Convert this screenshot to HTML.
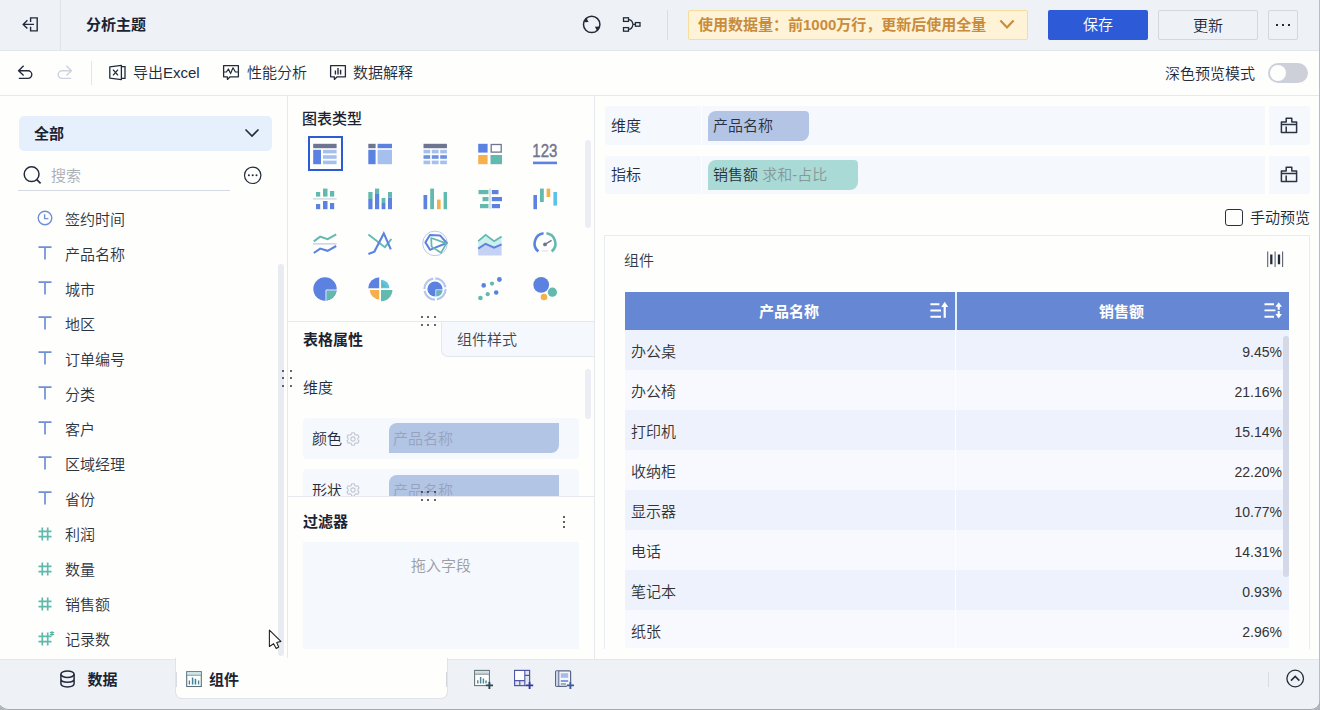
<!DOCTYPE html>
<html lang="zh-CN">
<head>
<meta charset="utf-8">
<title>分析主题</title>
<style>
*{box-sizing:border-box;margin:0;padding:0}
html,body{width:1320px;height:710px;overflow:hidden;background:#fefefd}
body{font-family:"Liberation Sans","Noto Sans CJK SC",sans-serif;font-size:15px;color:#232b3a;position:relative;font-weight:350}
.abs{position:absolute}
.t{position:absolute;white-space:nowrap;line-height:20px;height:20px;padding-top:1px}
.b{font-weight:700}
svg{position:absolute;overflow:visible}
/* header */
#hdr{left:0;top:0;width:1320px;height:51px;background:#eef1f5;border-bottom:1px solid #e2e5ea}
#tbar{left:0;top:51px;width:1320px;height:45px;background:#fefefd;border-bottom:1px solid #e6e8ed}
.vline{position:absolute;width:1px;background:#dcdfe6}
.btn{position:absolute;top:10px;height:30px;border-radius:2px;text-align:center;line-height:29px;font-size:15px}
/* left */
.fi{position:absolute;left:65px;line-height:20px;height:20px;padding-top:1px;white-space:nowrap;color:#2c3442}
/* table */
.row{position:absolute;left:625px;width:664px;height:40px}
.row .n{position:absolute;left:6px;top:12px;line-height:20px;color:#333}
.row .v{position:absolute;right:7px;top:12px;line-height:20px;color:#333;font-size:14px}
.row .d{position:absolute;left:330px;top:0;width:1px;height:40px;background:#fdfdfe}
</style>
</head>
<body>
<!-- HEADER -->
<div id="hdr" class="abs"></div>
<div class="vline" style="left:60px;top:0;height:50px;background:#dfe2e8"></div>
<div class="t b" style="left:86px;top:14px;font-size:15px;color:#1b2333">分析主题</div>
<div class="vline" style="left:667px;top:10px;height:30px;background:#d9dce3"></div>
<div class="abs" style="left:688px;top:10px;width:340px;height:30px;background:#fef3d6;border:1px solid #f8dc9c;border-radius:2px"></div>
<div class="t b" style="left:698px;top:14px;color:#c98b3c">使用数据量：前1000万行，更新后使用全量</div>
<div class="btn" style="left:1048px;width:100px;background:#2d5bd7;color:#fff">保存</div>
<div class="btn" style="left:1158px;width:100px;border:1px solid #d3d7de;color:#1b2333">更新</div>
<div class="btn" style="left:1268px;width:30px;border:1px solid #d3d7de"></div>
<!-- TOOLBAR -->
<div id="tbar" class="abs"></div>
<div class="vline" style="left:91px;top:61px;height:24px;background:#e3e5ea"></div>
<div class="t" style="left:133px;top:62px">导出Excel</div>
<div class="t" style="left:247px;top:62px">性能分析</div>
<div class="t" style="left:353px;top:62px">数据解释</div>
<div class="t" style="left:1165px;top:63px">深色预览模式</div>
<div class="abs" style="left:1268px;top:63px;width:40px;height:20px;border-radius:10px;background:#cdd0d9"></div>
<div class="abs" style="left:1270px;top:65px;width:16px;height:16px;border-radius:8px;background:#fefefd"></div>
<svg style="left:20px;top:15px" width="20" height="19" viewBox="0 0 20 19"><path d="M10.6 7 V2.9 H17.2 V15.9 H10.6 V11.8" fill="none" stroke="#232b3a" stroke-width="1.4"/><path d="M14 9.4 H3.4 M7.4 5.2 L3.2 9.4 L7.4 13.6" fill="none" stroke="#232b3a" stroke-width="1.4"/></svg>
<svg style="left:581px;top:14px" width="22" height="22" viewBox="0 0 22 22"><circle cx="10.7" cy="10.4" r="8.2" fill="none" stroke="#232b3a" stroke-width="1.5"/><path d="M5.2 3.4 L7.6 8 L3.2 8.2 Z" fill="#232b3a"/><path d="M16.4 17.4 L13.9 12.8 L18.3 12.6 Z" fill="#232b3a"/><path d="M2.2 9.6 L3 12" stroke="#eef1f5" stroke-width="0" /></svg>
<svg style="left:622px;top:16px" width="20" height="17" viewBox="0 0 20 17"><rect x="1.5" y="1.8" width="5" height="3.6" fill="none" stroke="#232b3a" stroke-width="1.3"/><rect x="1.5" y="11.6" width="5" height="3.6" fill="none" stroke="#232b3a" stroke-width="1.3"/><rect x="13.4" y="6.6" width="4.6" height="3.6" fill="none" stroke="#232b3a" stroke-width="1.3"/><path d="M6.5 3.6 C9.6 3.6 10.6 6 11 8.4 C10.6 10.8 9.6 13.4 6.5 13.4 M11 8.4 H13.4" fill="none" stroke="#232b3a" stroke-width="1.3"/></svg>
<svg style="left:999px;top:19px" width="16" height="11" viewBox="0 0 16 11"><path d="M1.4 1.6 L8 8.4 L14.6 1.6" fill="none" stroke="#c98b3c" stroke-width="2.2"/></svg>
<div class="abs" style="left:1276px;top:23.5px;width:2.2px;height:2.2px;background:#232b3a"></div>
<div class="abs" style="left:1282px;top:23.5px;width:2.2px;height:2.2px;background:#232b3a"></div>
<div class="abs" style="left:1288px;top:23.5px;width:2.2px;height:2.2px;background:#232b3a"></div>
<svg style="left:17px;top:64px" width="17" height="16" viewBox="0 0 17 16"><path d="M6.6 1.8 L1.6 6.8 L6.6 11.6 M1.8 6.8 H11 A3.8 3.8 0 0 1 11 14.4 H1.8" fill="none" stroke="#232b3a" stroke-width="1.4"/></svg>
<svg style="left:56px;top:64px" width="17" height="16" viewBox="0 0 17 16"><path d="M10.4 1.8 L15.4 6.8 L10.4 11.6 M15.2 6.8 H6 A3.8 3.8 0 0 0 6 14.4 H15.2" fill="none" stroke="#cdd2de" stroke-width="1.4"/></svg>
<svg style="left:108px;top:64px" width="19" height="17" viewBox="0 0 19 17"><path d="M1.8 2.8 L13.4 1.4 V15.6 L1.8 14.2 Z" fill="none" stroke="#232b3a" stroke-width="1.3" stroke-linejoin="round"/><path d="M5 5.6 L10 11.4 M10 5.6 L5 11.4" fill="none" stroke="#232b3a" stroke-width="1.3"/><path d="M13.4 2.6 H17 V14.4 H13.4" fill="none" stroke="#232b3a" stroke-width="1.3"/></svg>
<svg style="left:222px;top:64px" width="18" height="17" viewBox="0 0 18 17"><path d="M1.6 1.6 H16.4 V12.8 H8.2 L5.4 15.4 V12.8 H1.6 Z" fill="none" stroke="#232b3a" stroke-width="1.3" stroke-linejoin="round"/><path d="M1.6 8 H4.4 L6.4 5 L8.6 9.6 L11 3.8 L13.4 8 H16.4" fill="none" stroke="#232b3a" stroke-width="1.2" stroke-linejoin="round"/></svg>
<svg style="left:329px;top:64px" width="18" height="17" viewBox="0 0 18 17"><path d="M1.6 1.6 H16.4 V12.8 H8.2 L5.4 15.4 V12.8 H1.6 Z" fill="none" stroke="#232b3a" stroke-width="1.3" stroke-linejoin="round"/><path d="M6.4 10.4 V6.6 M9 10.4 V4 M11.6 10.4 V5.8" fill="none" stroke="#232b3a" stroke-width="1.4"/></svg>
<!-- LEFT PANEL -->
<div id="left">
<div class="vline" style="left:287px;top:96px;height:563px;background:#e6e8ed"></div>
<div class="abs" style="left:19px;top:116px;width:253px;height:35px;background:#e6f0fd;border-radius:5px"></div>
<div class="t b" style="left:34px;top:123px;color:#1b2333">全部</div>
<svg style="left:244px;top:128px" width="16" height="10" viewBox="0 0 16 10"><path d="M1.5 1.5 L8 8 L14.5 1.5" fill="none" stroke="#232b3a" stroke-width="1.6"/></svg>
<svg style="left:22px;top:165px" width="22" height="22" viewBox="0 0 22 22"><circle cx="9.6" cy="9.2" r="7.4" fill="none" stroke="#232b3a" stroke-width="1.5"/><path d="M14.8 14.6 L18.6 18.4" stroke="#232b3a" stroke-width="1.6" fill="none"/></svg>
<div class="t" style="left:51px;top:165px;color:#a9adb5">搜索</div>
<div class="abs" style="left:18px;top:190px;width:212px;height:1px;background:#d5d9e2"></div>
<svg style="left:243px;top:166px" width="20" height="20" viewBox="0 0 20 20"><circle cx="9.7" cy="9.3" r="8.2" fill="none" stroke="#232b3a" stroke-width="1.2"/><circle cx="5.9" cy="9.3" r="1" fill="#232b3a"/><circle cx="9.7" cy="9.3" r="1" fill="#232b3a"/><circle cx="13.5" cy="9.3" r="1" fill="#232b3a"/></svg>
<div class="fi" style="top:209px">签约时间</div>
<svg style="left:37px;top:210px" width="16" height="16" viewBox="0 0 16 16"><circle cx="8" cy="8" r="6.8" fill="none" stroke="#6f8fd6" stroke-width="1.4"/><path d="M7.6 4.2 V8.6 H11.4" fill="none" stroke="#6f8fd6" stroke-width="1.4"/></svg>
<div class="fi" style="top:244px">产品名称</div>
<svg style="left:38px;top:246px" width="14" height="14" viewBox="0 0 14 14"><path d="M0.5 1.2 H13.5 M7 1.2 V13.6" fill="none" stroke="#6f8fd6" stroke-width="1.7"/></svg>
<div class="fi" style="top:279px">城市</div>
<svg style="left:38px;top:281px" width="14" height="14" viewBox="0 0 14 14"><path d="M0.5 1.2 H13.5 M7 1.2 V13.6" fill="none" stroke="#6f8fd6" stroke-width="1.7"/></svg>
<div class="fi" style="top:314px">地区</div>
<svg style="left:38px;top:316px" width="14" height="14" viewBox="0 0 14 14"><path d="M0.5 1.2 H13.5 M7 1.2 V13.6" fill="none" stroke="#6f8fd6" stroke-width="1.7"/></svg>
<div class="fi" style="top:349px">订单编号</div>
<svg style="left:38px;top:351px" width="14" height="14" viewBox="0 0 14 14"><path d="M0.5 1.2 H13.5 M7 1.2 V13.6" fill="none" stroke="#6f8fd6" stroke-width="1.7"/></svg>
<div class="fi" style="top:384px">分类</div>
<svg style="left:38px;top:386px" width="14" height="14" viewBox="0 0 14 14"><path d="M0.5 1.2 H13.5 M7 1.2 V13.6" fill="none" stroke="#6f8fd6" stroke-width="1.7"/></svg>
<div class="fi" style="top:419px">客户</div>
<svg style="left:38px;top:421px" width="14" height="14" viewBox="0 0 14 14"><path d="M0.5 1.2 H13.5 M7 1.2 V13.6" fill="none" stroke="#6f8fd6" stroke-width="1.7"/></svg>
<div class="fi" style="top:454px">区域经理</div>
<svg style="left:38px;top:456px" width="14" height="14" viewBox="0 0 14 14"><path d="M0.5 1.2 H13.5 M7 1.2 V13.6" fill="none" stroke="#6f8fd6" stroke-width="1.7"/></svg>
<div class="fi" style="top:489px">省份</div>
<svg style="left:38px;top:491px" width="14" height="14" viewBox="0 0 14 14"><path d="M0.5 1.2 H13.5 M7 1.2 V13.6" fill="none" stroke="#6f8fd6" stroke-width="1.7"/></svg>
<div class="fi" style="top:524px">利润</div>
<svg style="left:38px;top:527px" width="16" height="14" viewBox="0 0 16 14"><path d="M4.3 0.5 V13.5 M9.7 0.5 V13.5 M0.5 4.3 H13.5 M0.5 9.7 H13.5" fill="none" stroke="#5fb9ac" stroke-width="1.7"/></svg>
<div class="fi" style="top:559px">数量</div>
<svg style="left:38px;top:562px" width="16" height="14" viewBox="0 0 16 14"><path d="M4.3 0.5 V13.5 M9.7 0.5 V13.5 M0.5 4.3 H13.5 M0.5 9.7 H13.5" fill="none" stroke="#5fb9ac" stroke-width="1.7"/></svg>
<div class="fi" style="top:594px">销售额</div>
<svg style="left:38px;top:597px" width="16" height="14" viewBox="0 0 16 14"><path d="M4.3 0.5 V13.5 M9.7 0.5 V13.5 M0.5 4.3 H13.5 M0.5 9.7 H13.5" fill="none" stroke="#5fb9ac" stroke-width="1.7"/></svg>
<div class="fi" style="top:629px">记录数</div>
<svg style="left:38px;top:632px" width="16" height="14" viewBox="0 0 16 14"><path d="M4.3 0.5 V13.5 M9.7 0.5 V13.5 M0.5 4.3 H13.5 M0.5 9.7 H13.5" fill="none" stroke="#5fb9ac" stroke-width="1.7"/><path d="M14 -1 V3.8 M11.9 0.2 L16.1 2.6 M16.1 0.2 L11.9 2.6" stroke="#4fb3a4" stroke-width="1.1" fill="none"/></svg>
<div class="abs" style="left:278px;top:264px;width:6px;height:392px;border-radius:3px;background:#e9ebf2"></div>
<svg style="left:268px;top:629px" width="16" height="22" viewBox="0 0 16 22"><path d="M1.4 1.1 V17.5 L5.6 14.7 L8.2 19.5 L10.7 18 L8.7 13.5 L12.9 12.4 Z" fill="#fff" stroke="#222" stroke-width="1.1" stroke-linejoin="round"/></svg>
</div>
<!-- CENTER PANEL -->
<div id="center">
<div class="vline" style="left:594px;top:96px;height:563px;background:#e6e8ed"></div>
<div class="t b" style="left:302px;top:108px;color:#1b2333;font-weight:500">图表类型</div>
<div class="abs" style="left:308px;top:136px;width:35px;height:35px;border:2px solid #2d5bd7"></div>
<svg style="left:0;top:0" width="1320" height="710" viewBox="0 0 1320 710"><rect x="313.2" y="143.8" width="23.4" height="4.4" fill="#6e7591"/><rect x="313.2" y="149.8" width="7.8" height="14.4" fill="#5b82e0"/><rect x="323" y="149.8" width="13.6" height="3.6" fill="#a6c0ee"/><rect x="323" y="155.2" width="13.6" height="3.6" fill="#a6c0ee"/><rect x="323" y="160.6" width="13.6" height="3.6" fill="#a6c0ee"/>
<rect x="368.3" y="143.8" width="7.3" height="4.4" fill="#6e7591"/><rect x="377.6" y="143.8" width="14.4" height="4.4" fill="#5b82e0"/><rect x="368.3" y="149.8" width="7.3" height="14.4" fill="#5b82e0"/><rect x="377.6" y="149.8" width="14.4" height="14.4" fill="#a6c0ee"/>
<rect x="423.5" y="143.8" width="23.4" height="4.4" fill="#6e7591"/><rect x="423.5" y="149.8" width="6.7" height="3.6" fill="#a6c0ee"/><rect x="431.8" y="149.8" width="6.8" height="3.6" fill="#a6c0ee"/><rect x="440.2" y="149.8" width="6.7" height="3.6" fill="#a6c0ee"/><rect x="423.5" y="155.2" width="6.7" height="3.6" fill="#6d90e2"/><rect x="431.8" y="155.2" width="6.8" height="3.6" fill="#6d90e2"/><rect x="440.2" y="155.2" width="6.7" height="3.6" fill="#6d90e2"/><rect x="423.5" y="160.6" width="6.7" height="3.6" fill="#a6c0ee"/><rect x="431.8" y="160.6" width="6.8" height="3.6" fill="#a6c0ee"/><rect x="440.2" y="160.6" width="6.7" height="3.6" fill="#a6c0ee"/>
<rect x="478.2" y="143.8" width="9.4" height="8.8" fill="#5b82e0"/><rect x="491.2" y="144.5" width="10" height="7.6" fill="#fff" stroke="#6e7591" stroke-width="1.3"/><rect x="478.2" y="155" width="9.4" height="9.2" fill="#f5b04d"/><rect x="490.5" y="155" width="11.5" height="9.2" fill="#62b9ae"/>
<text x="532.3" y="157" font-family="Liberation Sans,sans-serif" font-size="18.5" fill="#6e7591" stroke="#6e7591" stroke-width="0.45" textLength="25" lengthAdjust="spacingAndGlyphs">123</text><rect x="533" y="161.6" width="24" height="2.6" fill="#5b82e0"/>
<rect x="316" y="192" width="4.2" height="4.6" fill="#62b9ae"/><rect x="323" y="188.6" width="4.5" height="8.0" fill="#62b9ae"/><rect x="330" y="191" width="4.2" height="5.6" fill="#62b9ae"/><rect x="313" y="198.3" width="23.6" height="1.2" fill="#c9cfdc"/><rect x="316" y="204" width="4.2" height="5.2" fill="#5b82e0"/><rect x="323" y="201" width="4.5" height="8.2" fill="#5b82e0"/><rect x="330" y="203" width="4.2" height="6.2" fill="#5b82e0"/>
<rect x="368.3" y="192" width="4.2" height="7" fill="#62b9ae"/><rect x="368.3" y="199" width="4.2" height="10.2" fill="#5b82e0"/><rect x="375" y="188.6" width="4.2" height="5.4" fill="#62b9ae"/><rect x="375" y="194" width="4.2" height="15.2" fill="#5b82e0"/><rect x="381.6" y="198" width="3.8" height="5" fill="#62b9ae"/><rect x="381.6" y="203" width="3.8" height="6.2" fill="#5b82e0"/><rect x="388" y="192" width="4" height="5.6" fill="#62b9ae"/><rect x="388" y="197.6" width="4" height="11.6" fill="#5b82e0"/>
<rect x="423.5" y="195" width="3.7" height="14.2" fill="#5b82e0"/><rect x="430.2" y="188.6" width="3.8" height="20.6" fill="#62b9ae"/><rect x="437" y="199.6" width="3.6" height="9.6" fill="#f5b04d"/><rect x="443.6" y="192" width="3.4" height="17.2" fill="#62b9ae"/>
<rect x="489.4" y="188.6" width="1.2" height="20.6" fill="#c9cfdc"/><rect x="478.5" y="190" width="10.0" height="4.2" fill="#62b9ae"/><rect x="482.5" y="197" width="6.0" height="4.2" fill="#62b9ae"/><rect x="480" y="204" width="8.5" height="4.2" fill="#62b9ae"/><rect x="491.8" y="190" width="6.7" height="4.2" fill="#5b82e0"/><rect x="491.8" y="197" width="10.2" height="4.2" fill="#5b82e0"/><rect x="491.8" y="204" width="8.2" height="4.2" fill="#5b82e0"/>
<rect x="533.4" y="195" width="3.6" height="14.2" fill="#5b82e0"/><rect x="540" y="188.6" width="3.8" height="13.4" fill="#62b9ae"/><rect x="546.6" y="188.6" width="3.6" height="8.4" fill="#f5b04d"/><rect x="553.4" y="192" width="3.6" height="13.6" fill="#5cc3e8"/>
<polyline points="313.8,241.4 320.2,236.6 327.6,239.2 336.2,234.4" fill="none" stroke="#62b9ae" stroke-width="2"/><rect x="313" y="243.2" width="23.6" height="1.4" fill="#c9cfdc"/><polyline points="313.8,253 320.2,248.6 327.6,250.8 336.2,246" fill="none" stroke="#5b82e0" stroke-width="2.1"/>
<polyline points="368.4,234.4 384.9,247.2 391.4,239" fill="none" stroke="#62b9ae" stroke-width="1.9"/><polyline points="368.4,254 374.4,251.6 383.8,233.4 390.8,249.4" fill="none" stroke="#5b82e0" stroke-width="2.1"/>
<circle cx="435" cy="243.4" r="12.3" fill="none" stroke="#bccaec" stroke-width="1"/><polygon points="425.4,242.4 430,235 440,235.4 446.8,243 435.8,247.4 430,249.8" fill="none" stroke="#5b82e0" stroke-width="2" stroke-linejoin="round"/><polygon points="431.2,238 446.4,243.4 441,252.8 431.6,246.6" fill="none" stroke="#62b9ae" stroke-width="1.7" stroke-linejoin="round"/>
<polygon points="478.2,241.2 485.6,234.8 494.1,241.2 501.6,236.5 501.6,244.4 494.1,247.6 485.6,243.8 478.2,248.6" fill="#cdeeee"/><polygon points="478.2,248.6 485.6,243.8 494.1,247.6 501.6,244.4 501.6,255.6 478.2,255.6" fill="#c5d2f3"/><polyline points="478.2,241.2 485.6,234.8 494.1,241.2 501.6,236.5" fill="none" stroke="#62b9ae" stroke-width="1.7"/><polyline points="478.2,248.6 485.6,243.8 494.1,247.6 501.6,244.4" fill="none" stroke="#5b82e0" stroke-width="1.9"/>
<path d="M538.32 251.57 A10.4 10.4 0 0 1 543.55 233.30" fill="none" stroke="#5b82e0" stroke-width="2.6"/><path d="M546.45 233.30 A10.4 10.4 0 0 1 551.68 251.57" fill="none" stroke="#62b9ae" stroke-width="2.6"/><circle cx="545" cy="244.4" r="1.9" fill="#6e7591"/><path d="M545 244.4 L551.6 240.4" stroke="#6e7591" stroke-width="1.3"/><rect x="542" y="250.4" width="6" height="1" fill="#d5d9e3"/>
<circle cx="325" cy="289" r="11.7" fill="#5b82e0"/><path d="M326.6 290.6 H336.6 A11.7 11.7 0 0 1 326.6 300.6 Z" fill="#62b9ae"/><path d="M326 301 V290 H337" fill="none" stroke="#e9effb" stroke-width="1"/>
<path d="M379.2 288.2 V277.2 A11.4 11.4 0 0 0 368.2 288.2 Z" fill="#5b82e0"/><path d="M381 288.2 V279.8 A8.6 8.6 0 0 1 389.4 288.2 Z" fill="#5cc3e8"/><path d="M382.2 287 V282.6 L386.6 287 Z" fill="#62b9ae"/><path d="M379.2 290 H369.8 A9.6 9.6 0 0 0 379.2 299.4 Z" fill="#f5b04d"/><path d="M381 290 H392.4 A11.4 11.4 0 0 1 381 301.2 Z" fill="#62b9ae"/>
<circle cx="435" cy="289" r="10.6" fill="none" stroke="#b4c6f0" stroke-width="2.2" stroke-dasharray="14.6 2"/><circle cx="435" cy="289" r="7.6" fill="#5b82e0"/><path d="M436.4 290.4 H442.6 A7.6 7.6 0 0 1 436.4 296.6 Z" fill="#62b9ae"/><path d="M435.8 297 V289.8 H443" fill="none" stroke="#e9effb" stroke-width="0.9"/>
<circle cx="483.7" cy="285.4" r="2.3" fill="#5b82e0"/><circle cx="492" cy="283.6" r="2.1" fill="#62b9ae"/><circle cx="499.4" cy="279.5" r="2.4" fill="#5b82e0"/><circle cx="480.4" cy="298" r="2.3" fill="#62b9ae"/><circle cx="487.7" cy="294.2" r="2.1" fill="#62b9ae"/><circle cx="496.2" cy="292.5" r="2.3" fill="#5b82e0"/>
<circle cx="541.2" cy="284.8" r="7.9" fill="#5b82e0"/><circle cx="552.4" cy="292.2" r="4.6" fill="#62b9ae"/><circle cx="544" cy="297" r="3.3" fill="#f5b04d"/></svg>
<div class="abs" style="left:585px;top:140px;width:6px;height:88px;border-radius:3px;background:#eceef5"></div>
<div class="abs" style="left:288px;top:321px;width:306px;height:1px;background:#e6e8ed"></div>
<div class="abs" style="left:441px;top:321px;width:153px;height:36px;background:#f5f8fd;border-left:1px solid #e3e8f0;border-bottom:1px solid #e3e8f0;border-top:1px solid #e6e8ed;border-bottom-left-radius:7px"></div>
<div class="abs" style="left:420.7px;top:316.2px;width:2px;height:2px;border-radius:1px;background:#2c3444"></div><div class="abs" style="left:427.2px;top:316.2px;width:2px;height:2px;border-radius:1px;background:#2c3444"></div><div class="abs" style="left:433.7px;top:316.2px;width:2px;height:2px;border-radius:1px;background:#2c3444"></div><div class="abs" style="left:420.7px;top:324.2px;width:2px;height:2px;border-radius:1px;background:#2c3444"></div><div class="abs" style="left:427.2px;top:324.2px;width:2px;height:2px;border-radius:1px;background:#2c3444"></div><div class="abs" style="left:433.7px;top:324.2px;width:2px;height:2px;border-radius:1px;background:#2c3444"></div>
<div class="t b" style="left:303px;top:329px;color:#1b2333">表格属性</div>
<div class="t" style="left:457px;top:329px;color:#3b4657">组件样式</div>
<div class="abs" style="left:282.2px;top:369.7px;width:2px;height:2px;border-radius:1px;background:#2c3444"></div><div class="abs" style="left:290.2px;top:369.7px;width:2px;height:2px;border-radius:1px;background:#2c3444"></div><div class="abs" style="left:282.2px;top:377.2px;width:2px;height:2px;border-radius:1px;background:#2c3444"></div><div class="abs" style="left:290.2px;top:377.2px;width:2px;height:2px;border-radius:1px;background:#2c3444"></div><div class="abs" style="left:282.2px;top:384.7px;width:2px;height:2px;border-radius:1px;background:#2c3444"></div><div class="abs" style="left:290.2px;top:384.7px;width:2px;height:2px;border-radius:1px;background:#2c3444"></div>
<div class="t" style="left:303px;top:377px">维度</div>
<div class="abs" style="left:585px;top:369px;width:6px;height:50px;border-radius:3px;background:#eceef5"></div>
<div class="abs" style="left:303px;top:418px;width:276px;height:41px;background:#f5f8fd;border-radius:4px"></div>
<div class="t" style="left:312px;top:428px">颜色</div>
<svg style="left:345.5px;top:431.5px" width="14" height="14" viewBox="0 0 14 14"><path d="M5.78 0.72 L8.22 0.72 L8.63 2.27 L10.28 3.23 L11.83 2.80 L13.05 4.92 L11.91 6.05 L11.91 7.95 L13.05 9.08 L11.83 11.20 L10.28 10.77 L8.63 11.73 L8.22 13.28 L5.78 13.28 L5.37 11.73 L3.72 10.77 L2.17 11.20 L0.95 9.08 L2.09 7.95 L2.09 6.05 L0.95 4.92 L2.17 2.80 L3.72 3.23 L5.37 2.27 Z" fill="none" stroke="#c3c7d1" stroke-width="1.15" stroke-linejoin="round"/><circle cx="7" cy="7" r="2.1" fill="none" stroke="#c3c7d1" stroke-width="1.1"/></svg>
<div class="abs" style="left:389px;top:423px;width:170px;height:30px;background:#b2c5e5;border-radius:8px 0 8px 0"></div>
<div class="t" style="left:393px;top:428px;color:#96a3bf">产品名称</div>
<div class="abs" style="left:288px;top:469px;width:306px;height:27px;overflow:hidden"><div class="abs" style="left:15px;top:0;width:276px;height:41px;background:#f5f8fd;border-radius:4px"></div><div class="t" style="left:24px;top:11px">形状</div><svg style="left:57.5px;top:14px" width="14" height="14" viewBox="0 0 14 14"><path d="M5.78 0.72 L8.22 0.72 L8.63 2.27 L10.28 3.23 L11.83 2.80 L13.05 4.92 L11.91 6.05 L11.91 7.95 L13.05 9.08 L11.83 11.20 L10.28 10.77 L8.63 11.73 L8.22 13.28 L5.78 13.28 L5.37 11.73 L3.72 10.77 L2.17 11.20 L0.95 9.08 L2.09 7.95 L2.09 6.05 L0.95 4.92 L2.17 2.80 L3.72 3.23 L5.37 2.27 Z" fill="none" stroke="#c3c7d1" stroke-width="1.15" stroke-linejoin="round"/><circle cx="7" cy="7" r="2.1" fill="none" stroke="#c3c7d1" stroke-width="1.1"/></svg><div class="abs" style="left:101px;top:6px;width:170px;height:30px;background:#b2c5e5;border-radius:8px 0 8px 0"></div><div class="t" style="left:105px;top:11px;color:#96a3bf">产品名称</div></div>
<div class="abs" style="left:288px;top:496px;width:306px;height:1px;background:#e6e8ed"></div>
<div class="abs" style="left:420.7px;top:491.2px;width:2px;height:2px;border-radius:1px;background:#2c3444"></div><div class="abs" style="left:427.2px;top:491.2px;width:2px;height:2px;border-radius:1px;background:#2c3444"></div><div class="abs" style="left:433.7px;top:491.2px;width:2px;height:2px;border-radius:1px;background:#2c3444"></div><div class="abs" style="left:420.7px;top:498.7px;width:2px;height:2px;border-radius:1px;background:#2c3444"></div><div class="abs" style="left:427.2px;top:498.7px;width:2px;height:2px;border-radius:1px;background:#2c3444"></div><div class="abs" style="left:433.7px;top:498.7px;width:2px;height:2px;border-radius:1px;background:#2c3444"></div>
<div class="t b" style="left:303px;top:511px;color:#1b2333">过滤器</div>
<div class="abs" style="left:562.5px;top:515.5px;width:2px;height:2px;border-radius:1px;background:#232b3a"></div><div class="abs" style="left:562.5px;top:520.5px;width:2px;height:2px;border-radius:1px;background:#232b3a"></div><div class="abs" style="left:562.5px;top:525.5px;width:2px;height:2px;border-radius:1px;background:#232b3a"></div>
<div class="abs" style="left:303px;top:542px;width:276px;height:107px;background:#f5f8fd"></div>
<div class="t" style="left:411px;top:555px;color:#9a9da3">拖入字段</div>
</div>
<!-- RIGHT PANEL -->
<div id="right">
<div class="abs" style="left:605px;top:106px;width:96px;height:39px;background:#f5f8fd;border-radius:3px 0 0 3px"></div>
<div class="abs" style="left:702px;top:106px;width:563px;height:39px;background:#f5f8fd"></div>
<div class="abs" style="left:1269px;top:106px;width:41px;height:39px;background:#f5f8fd;border-radius:0 3px 3px 0"></div>
<div class="t" style="left:611px;top:115px">维度</div>
<div class="abs" style="left:605px;top:156px;width:96px;height:38px;background:#f5f8fd;border-radius:3px 0 0 3px"></div>
<div class="abs" style="left:702px;top:156px;width:563px;height:38px;background:#f5f8fd"></div>
<div class="abs" style="left:1269px;top:156px;width:41px;height:38px;background:#f5f8fd;border-radius:0 3px 3px 0"></div>
<div class="t" style="left:611px;top:164px">指标</div>
<svg style="left:1280px;top:117px" width="18" height="17" viewBox="0 0 18 17"><path d="M6.2 1.2 H11.8 V4.9 H16.6 V15.6 H1.4 V4.9 H6.2 Z M1.4 7.6 H16.6 M6.2 9.6 V15.6" fill="none" stroke="#2c3444" stroke-width="1.5" stroke-linejoin="round"/></svg>
<svg style="left:1280px;top:166px" width="18" height="17" viewBox="0 0 18 17"><path d="M6.2 1.2 H11.8 V4.9 H16.6 V15.6 H1.4 V4.9 H6.2 Z M1.4 7.6 H16.6 M6.2 9.6 V15.6" fill="none" stroke="#2c3444" stroke-width="1.5" stroke-linejoin="round"/></svg>
<div class="abs" style="left:708px;top:111px;width:101px;height:30px;background:#b3c4e4;border-radius:8px 4px 8px 0"></div>
<div class="t" style="left:713px;top:115px;color:#2a3040">产品名称</div>
<div class="abs" style="left:708px;top:160px;width:150px;height:30px;background:#a9dad5;border-radius:8px 4px 8px 0"></div>
<div class="t" style="left:713px;top:164px;color:#2a3040">销售额 <span style="color:#86999a">求和-占比</span></div>
<div class="abs" style="left:1225px;top:209px;width:18px;height:17px;border:1.5px solid #2a3040;border-radius:3px;background:#fefefd"></div>
<div class="t" style="left:1250px;top:207px">手动预览</div>
<div class="abs" style="left:604px;top:235px;width:706px;height:414px;border:1px solid #e8ebf0;border-bottom:none"></div>
<div class="t" style="left:624px;top:250px;color:#333a48">组件</div>
<svg style="left:1267px;top:251px" width="17" height="17" viewBox="0 0 17 17"><path d="M0.7 0.6 V16 M8.1 0.6 V16 M15.6 0.6 V16" stroke="#5a6275" stroke-width="1.1"/><path d="M4.3 3.4 V13.2 M12 3.4 V13.2" stroke="#232b3a" stroke-width="2.3"/></svg>
<div class="abs" style="left:625px;top:292px;width:664px;height:38px;background:#6687d3"></div>
<div class="abs" style="left:955px;top:292px;width:1.5px;height:38px;background:#e6f2fd"></div>
<div class="t b" style="left:759px;top:301px;color:#fff">产品名称</div>
<div class="t b" style="left:1099px;top:301px;color:#fff">销售额</div>
<svg style="left:930px;top:300px" width="20" height="20" viewBox="0 0 20 20"><path d="M0.4 4.2 H9.4 M0.4 10.5 H11 M0.4 16.8 H11" stroke="#fff" stroke-width="1.9"/><path d="M14.7 17.8 V6" stroke="#fff" stroke-width="2.2"/><path d="M14.7 1.8 L18.2 6.9 H11.2 Z" fill="#fff"/></svg>
<svg style="left:1264px;top:300px" width="20" height="20" viewBox="0 0 20 20"><path d="M0.5 4.3 H10 M0.5 10.4 H11.4 M0.5 16.8 H10" stroke="#fff" stroke-width="1.9"/><path d="M14.7 6 V9.8 M14.7 11 V14.6" stroke="#fff" stroke-width="2.1"/><path d="M14.7 2.2 L18 6.7 H11.4 Z M14.7 18.5 L18 14 H11.4 Z" fill="#fff"/></svg>
<div class="abs" style="left:0;top:330px;width:1320px;height:318px;overflow:hidden"><div class="row" style="top:0px;background:#eef2fc"><span class="n">办公桌</span><span class="v">9.45%</span><span class="d"></span></div><div class="row" style="top:40px;background:#f7f9fe"><span class="n">办公椅</span><span class="v">21.16%</span><span class="d"></span></div><div class="row" style="top:80px;background:#eef2fc"><span class="n">打印机</span><span class="v">15.14%</span><span class="d"></span></div><div class="row" style="top:120px;background:#f7f9fe"><span class="n">收纳柜</span><span class="v">22.20%</span><span class="d"></span></div><div class="row" style="top:160px;background:#eef2fc"><span class="n">显示器</span><span class="v">10.77%</span><span class="d"></span></div><div class="row" style="top:200px;background:#f7f9fe"><span class="n">电话</span><span class="v">14.31%</span><span class="d"></span></div><div class="row" style="top:240px;background:#eef2fc"><span class="n">笔记本</span><span class="v">0.93%</span><span class="d"></span></div><div class="row" style="top:280px;background:#f7f9fe"><span class="n">纸张</span><span class="v">2.96%</span><span class="d"></span></div></div>
<div class="abs" style="left:1283px;top:336px;width:6px;height:241px;border-radius:3px;background:#d3d9e6"></div>
</div>
<!-- BOTTOM BAR -->
<div id="bottom">
<div class="abs" style="left:0;top:659px;width:1320px;height:51px;background:#eef1f6;border-top:1px solid #e3e6ec"></div>
<div class="abs" style="left:175px;top:658px;width:273px;height:40.5px;background:#fefefd;border-radius:0 0 7px 7px;border:1px solid #dfe3ea;border-top:none"></div>
<div class="vline" style="left:446px;top:672px;height:15px;background:#d3d6dd"></div>
<div class="vline" style="left:176px;top:672px;height:15px;background:#d9dce3"></div>
<svg style="left:59px;top:670px" width="17" height="18" viewBox="0 0 17 18"><ellipse cx="8.5" cy="4.2" rx="6.6" ry="3.2" fill="none" stroke="#232b3a" stroke-width="1.5"/><path d="M1.9 4.2 V13.6 C1.9 15.6 5 16.9 8.5 16.9 C12 16.9 15.1 15.6 15.1 13.6 V4.2 M1.9 9 C1.9 11 5 12.2 8.5 12.2 C12 12.2 15.1 11 15.1 9" fill="none" stroke="#232b3a" stroke-width="1.5"/></svg>
<div class="t b" style="left:87.5px;top:669px;color:#1b2333">数据</div>
<svg style="left:186px;top:671px" width="16" height="16" viewBox="0 0 16 16"><rect x="0.7" y="0.7" width="14.6" height="14.8" fill="#fdfefe" stroke="#5d6f78" stroke-width="1.1"/><rect x="1.3" y="1.3" width="13.4" height="2.4" fill="#c9e9e8"/><path d="M0.7 4.2 H15.3" stroke="#6f9a98" stroke-width="1"/><rect x="6" y="7.4" width="3.6" height="6" fill="#bfe6dc"/><path d="M3.4 13.4 V9.6 M6.5 13.4 V6.6 M9.6 13.4 V8 M12.6 13.4 V9.6" stroke="#4a7f9a" stroke-width="1.3"/></svg>
<div class="t b" style="left:209px;top:669px;color:#1b2333">组件</div>
<svg style="left:473px;top:669px" width="22" height="22" viewBox="0 0 22 22"><rect x="1.6" y="1.4" width="14.8" height="15.2" fill="#fdfefe" stroke="#5f737c" stroke-width="1.05"/><rect x="2.3" y="2.2" width="13.4" height="2.6" fill="#cfd9dc"/><path d="M1.6 5.2 H16.4" stroke="#6a7f88" stroke-width="0.9"/><path d="M4.8 14.4 V11.2 M7.6 14.4 V8 M10.4 14.4 V9.6 M13 14.4 V11.6" stroke="#4b8494" stroke-width="1.4"/><path d="M16.4 12.8 V20 M12.8 16.4 H20" stroke="#eef1f5" stroke-width="4.6"/><path d="M16.4 12.8 V20 M12.8 16.4 H20" stroke="#2c4652" stroke-width="1.9"/></svg>
<svg style="left:513px;top:669px" width="22" height="22" viewBox="0 0 22 22"><rect x="1.6" y="1.4" width="15" height="15.2" fill="#e3e6ee" stroke="#4d57a6" stroke-width="1.2"/><rect x="2.2" y="2" width="9.6" height="9.6" fill="#fefefe"/><path d="M11.8 1.4 V16.6 M1.6 11.6 H11.8 M6.8 11.6 V16.6 M11.8 6.4 H16.6" fill="none" stroke="#4d57a6" stroke-width="1.1"/><path d="M16.6 12.8 V20 M13 16.4 H20.2" stroke="#eef1f5" stroke-width="4.6"/><path d="M16.6 12.8 V20 M13 16.4 H20.2" stroke="#343b9c" stroke-width="1.9"/></svg>
<svg style="left:554px;top:669px" width="22" height="22" viewBox="0 0 22 22"><rect x="1.6" y="1.8" width="15" height="15.6" rx="1" fill="#f4f6fb" stroke="#5a6688" stroke-width="1.2"/><rect x="2.2" y="2.4" width="2.4" height="14.4" fill="#c9d3ea"/><path d="M4.8 1.8 V17.4" stroke="#5a6688" stroke-width="1"/><rect x="6.8" y="4.2" width="7.4" height="4.6" fill="#a9bce8"/><path d="M6.8 12 H14.2" stroke="#5b7fd8" stroke-width="1.5"/><path d="M6.8 15 H12" stroke="#7a869e" stroke-width="1.3"/><path d="M16.4 12.8 V20 M12.8 16.4 H20" stroke="#eef1f5" stroke-width="4.6"/><path d="M16.4 12.8 V20 M12.8 16.4 H20" stroke="#3c5a9c" stroke-width="1.9"/></svg>
<div class="vline" style="left:1268px;top:672px;height:15px;background:#d9dce3"></div>
<svg style="left:1285px;top:670px" width="20" height="20" viewBox="0 0 20 20"><circle cx="10.2" cy="8.5" r="8.3" fill="none" stroke="#232b3a" stroke-width="1.3"/><path d="M6 10.6 L10.2 6.4 L14.4 10.6" fill="none" stroke="#232b3a" stroke-width="1.5"/></svg>
</div>
<div class="abs" style="left:1319px;top:0;width:1px;height:710px;background:#b9bcc2"></div>
<div class="abs" style="left:-2px;top:640px;width:1323px;height:69.5px;border:1.5px solid #a6a9ae;border-top:none;border-radius:0 0 10px 10px;box-shadow:0 0 0 12px #aeb4bd;clip-path:inset(0 -20px -20px -20px);pointer-events:none"></div>
</body>
</html>
